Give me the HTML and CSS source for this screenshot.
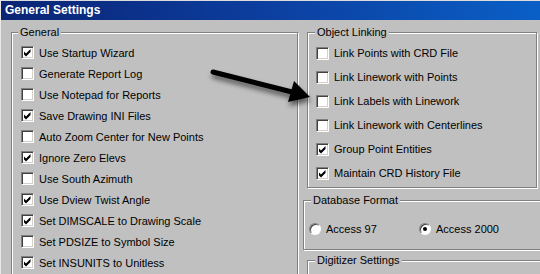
FILE: index.html
```html
<!DOCTYPE html>
<html lang="en">
<head>
    <meta charset="UTF-8">
    <meta name="viewport" content="width=device-width, initial-scale=1.0">
    <title>General Settings</title>
    <link rel="stylesheet" href="styles.css">
</head>
<body>
    <div class="window">
        <div class="titlebar">General Settings</div>

        <div class="panes">
            <fieldset class="group general">
                <legend>General</legend>
                <label class="chk"><span class="box on"></span>Use Startup Wizard</label>
                <label class="chk"><span class="box"></span>Generate Report Log</label>
                <label class="chk"><span class="box"></span>Use Notepad for Reports</label>
                <label class="chk"><span class="box on"></span>Save Drawing INI Files</label>
                <label class="chk"><span class="box"></span>Auto Zoom Center for New Points</label>
                <label class="chk"><span class="box on"></span>Ignore Zero Elevs</label>
                <label class="chk"><span class="box"></span>Use South Azimuth</label>
                <label class="chk"><span class="box on"></span>Use Dview Twist Angle</label>
                <label class="chk"><span class="box on"></span>Set DIMSCALE to Drawing Scale</label>
                <label class="chk"><span class="box"></span>Set PDSIZE to Symbol Size</label>
                <label class="chk"><span class="box on"></span>Set INSUNITS to Unitless</label>
            </fieldset>

            <div class="rightcol">
                <fieldset class="group linking">
                    <legend>Object Linking</legend>
                    <label class="chk"><span class="box"></span>Link Points with CRD File</label>
                    <label class="chk"><span class="box"></span>Link Linework with Points</label>
                    <label class="chk"><span class="box"></span>Link Labels with Linework</label>
                    <label class="chk"><span class="box"></span>Link Linework with Centerlines</label>
                    <label class="chk"><span class="box on"></span>Group Point Entities</label>
                    <label class="chk"><span class="box on"></span>Maintain CRD History File</label>
                </fieldset>

                <fieldset class="group dbformat">
                    <legend>Database Format</legend>
                    <label class="rad first"><span class="dot"></span>Access 97</label>
                    <label class="rad"><span class="dot on"></span>Access 2000</label>
                </fieldset>

                <fieldset class="group digitizer">
                    <legend>Digitizer Settings</legend>
                </fieldset>
            </div>
        </div>

        <!-- pointer drawn over the dialog -->
        <svg class="arrow" width="540" height="274" viewBox="0 0 540 274">
            <defs>
                <filter id="soft" x="-20%" y="-50%" width="140%" height="200%">
                    <feDropShadow dx="1" dy="4" stdDeviation="2.5" flood-color="#000" flood-opacity="0.55"/>
                </filter>
            </defs>
            <g filter="url(#soft)">
                <line x1="213" y1="72" x2="296" y2="93" stroke="#000" stroke-width="5" stroke-linecap="round"/>
                <polygon points="294,81 310,97 288,102" fill="#000"/>
            </g>
        </svg>
    </div>
</body>
</html>
```

FILE: styles.css
```css
body {
    margin: 0;
    background: #c0c0c0;
    font-family: "Liberation Sans", Arial, sans-serif;
    font-size: 11px;
    color: #000;
}
.window {
    position: relative;
    width: 540px;
    height: 274px;
    overflow: hidden;
    background: #c0c0c0;
    border-top: 1px solid #dcdcdc;
    border-left: 1px solid #e8e8e8;
    box-sizing: border-box;
}
.titlebar {
    height: 19px;
    line-height: 19px;
    padding-left: 4px;
    font-size: 12px;
    font-weight: bold;
    color: #fff;
    background: linear-gradient(to right, #0a2474, #0c3c9c 45%, #0a5fc6);
}
.panes {
    display: flex;
    align-items: flex-start;
    padding-top: 6px;
}

/* etched group boxes */
.group {
    margin: 0;
    padding: 0;
    border: 1px solid #808080;
    box-shadow: inset 1px 1px #fff, 1px 1px #fff;
    min-width: 0;
    flex: none;
}
.group legend {
    padding: 0 2px;
    line-height: 13px;
    background: #c0c0c0;
}
.general {
    width: 287px;
    height: 260px;
    margin-left: 10px;
    padding: 3px 0 0 9px;
    box-sizing: border-box;
}
.general legend {
    margin-left: -3px;
}
.rightcol {
    display: flex;
    flex-direction: column;
    align-items: flex-start;
    margin-left: 5px;
    flex: none;
}
.linking {
    width: 230px;
    height: 162px;
    margin-left: 4px;
    padding: 2px 0 0 8px;
    box-sizing: border-box;
}
.linking legend {
    margin-left: -1px;
}
.linking .chk {
    height: 24px;
}
.dbformat {
    width: 260px;
    height: 56px;
    margin-top: 6px;
    padding: 14px 0 0 5px;
    box-sizing: border-box;
    display: flex;
}
.dbformat legend {
    margin-left: 2px;
}
.digitizer {
    width: 260px;
    height: 40px;
    margin-top: 4px;
    margin-left: 4px;
    padding: 0 0 0 8px;
    box-sizing: border-box;
}
.digitizer legend {
    margin-left: -1px;
}

/* check boxes */
.chk {
    display: flex;
    align-items: center;
    height: 21px;
    white-space: nowrap;
}
.box {
    width: 13px;
    height: 13px;
    box-sizing: border-box;
    margin-right: 5px;
    flex: none;
    background: #fff;
    border: 1px solid;
    border-color: #808080 #fff #fff #808080;
    box-shadow: inset 1px 1px #404040, inset -1px -1px #d4d0c8;
}
.box.on {
    background: #fff url("data:image/svg+xml,%3Csvg xmlns='http://www.w3.org/2000/svg' width='11' height='11'%3E%3Cpolygon points='2,4.5 4,6.5 8.5,2 8.5,5 4,9.5 2,7.5' fill='%23000'/%3E%3C/svg%3E") no-repeat 0 0;
}

/* radio buttons */
.rad {
    display: flex;
    align-items: center;
    height: 16px;
    white-space: nowrap;
}
.rad.first {
    width: 110px;
}
.dot {
    width: 12px;
    height: 12px;
    box-sizing: border-box;
    margin-right: 5px;
    border-radius: 50%;
    background: #fff;
    border: 1px solid;
    border-color: #808080 #fff #fff #808080;
    box-shadow: inset 1px 1px #404040;
    display: flex;
    align-items: center;
    justify-content: center;
}
.dot.on::after {
    content: "";
    width: 4px;
    height: 4px;
    border-radius: 50%;
    background: #000;
}

.arrow {
    position: absolute;
    left: -1px;
    top: -1px;
    pointer-events: none;
}
```
